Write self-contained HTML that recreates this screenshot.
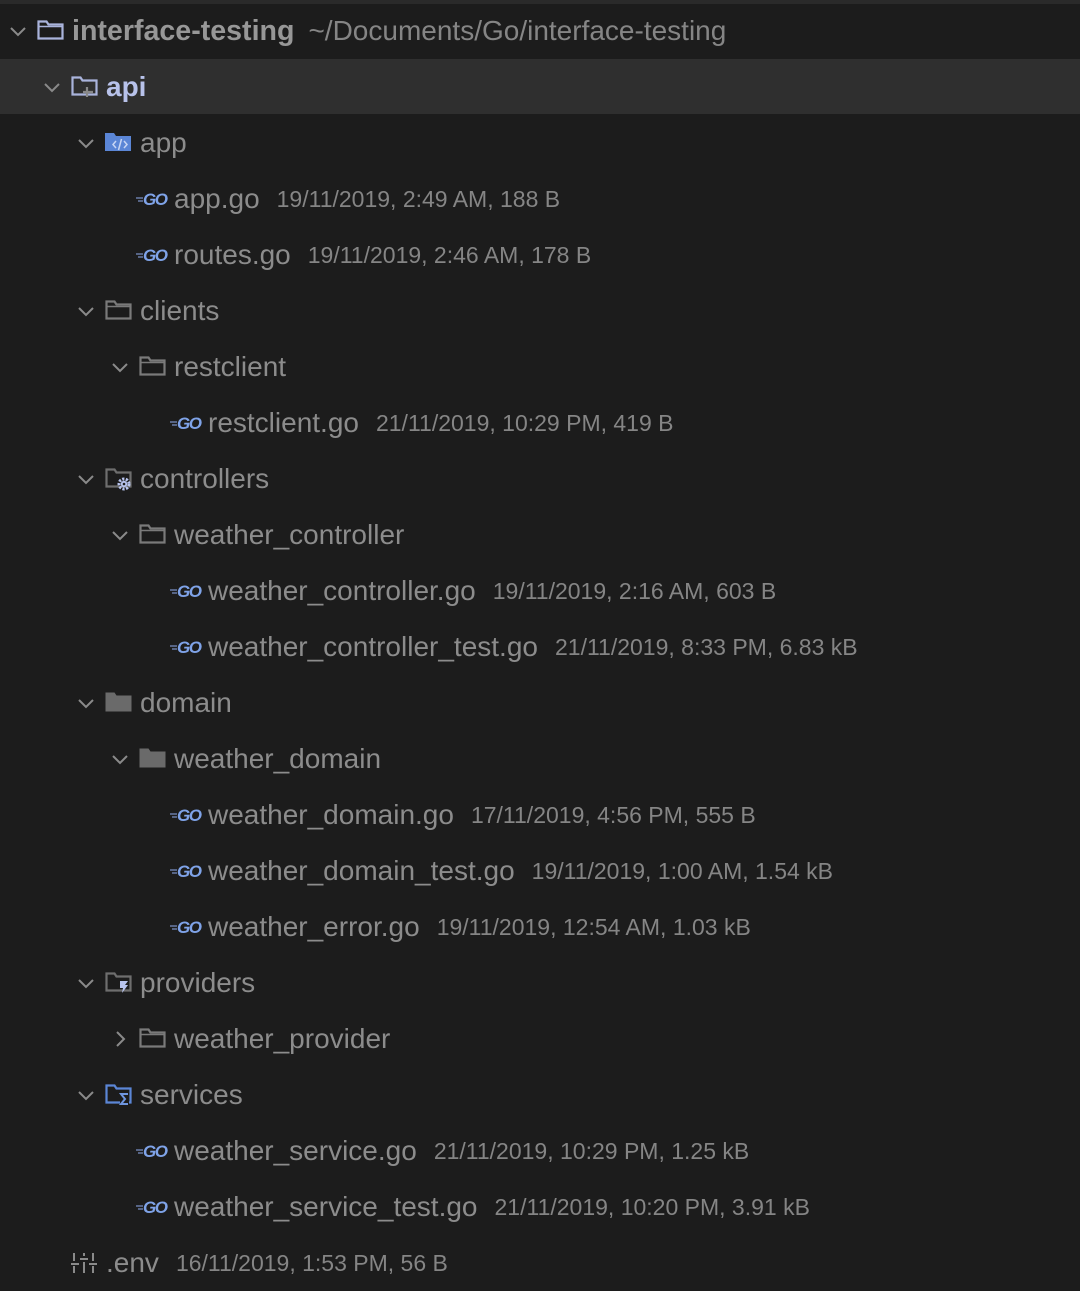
<!DOCTYPE html>
<html><head><meta charset="utf-8"><style>
html,body{margin:0;padding:0;background:#1c1c1c;width:1080px;height:1286px;overflow:hidden;font-family:"Liberation Sans",sans-serif}
.top{position:absolute;left:0;top:0;width:1080px;height:4px;background:#2a2a2a}
.hl{position:absolute;left:0;top:59px;width:1080px;height:55px;background:#2f2f2f}
.r{position:absolute;height:56px;line-height:56px;white-space:nowrap}
.n{font-size:28px;color:#8c8c8c;vertical-align:middle}
.d{font-size:23px;color:#858585;margin-left:17px;vertical-align:middle}
svg{vertical-align:middle}
.ch{position:absolute;top:18px}
.ic{position:absolute;top:16px}
.t{position:absolute;top:0}
</style></head><body>
<div class="top"></div><div class="hl"></div>

<div class="r" style="top:3px;left:0;width:1080px">
<svg class="ch" style="left:8px" width="20" height="20" viewBox="0 0 20 20"><polyline points="3,7 10,14 17,7" fill="none" stroke="#8a8a8a" stroke-width="2"/></svg>
<svg class="ic" style="left:37px" width="27" height="22" viewBox="0 0 27 22"><path d="M1.5 2.5h8l2 3h14v14h-24z" fill="none" stroke="#aab4dc" stroke-width="2.2"/><line x1="1.5" y1="7.5" x2="25.5" y2="7.5" stroke="#aab4dc" stroke-width="1.5"/></svg>
<span class="t" style="left:72px"><span class="n" style="font-weight:bold;color:#979797;font-size:28.6px">interface-testing</span><span class="d" style="font-size:28px;margin-left:14px">~/Documents/Go/interface-testing</span></span>
</div>

<div class="r" style="top:59px;left:0">
<svg class="ch" style="left:42px" width="20" height="20" viewBox="0 0 20 20"><polyline points="3,7 10,14 17,7" fill="none" stroke="#8a8a8a" stroke-width="2"/></svg>
<svg class="ic" style="left:71px" width="28" height="24" viewBox="0 0 28 24"><path d="M1.5 2.5h8l2 3h14v14h-24z" fill="none" stroke="#aab4dc" stroke-width="2.2"/><path d="M16 12v10M12 17h10" stroke="#888" stroke-width="2.2"/></svg>
<span class="t" style="left:106px"><span class="n" style="font-weight:bold;color:#b8c2ea">api</span></span>
</div>

<div class="r" style="top:115px;left:0">
<svg class="ch" style="left:76px" width="20" height="20" viewBox="0 0 20 20"><polyline points="3,7 10,14 17,7" fill="none" stroke="#8a8a8a" stroke-width="2"/></svg>
<svg class="ic" style="left:105px" width="28" height="24" viewBox="0 0 28 24"><path d="M0 2h9l2 3h15v15h-26z" fill="#5b86d6"/><path d="M11 10l-3 3.5 3 3.5M19 10l3 3.5-3 3.5M16.5 8l-3 11" fill="none" stroke="#c8d6f4" stroke-width="1.5"/></svg>
<span class="t" style="left:140px"><span class="n">app</span></span>
</div>

<div class="r" style="top:171px;left:136px"><svg width="33" height="16" viewBox="0 0 33 16"><path d="M0 7h7M2 10h5" stroke="#7a8fc4" stroke-width="1.3"/><text x="7" y="14" font-family="Liberation Sans" font-weight="bold" font-style="italic" font-size="17" fill="#7fa3e8" textLength="25">GO</text></svg><span class="n" style="margin-left:5px">app.go</span><span class="d">19/11/2019, 2:49 AM, 188 B</span></div>
<div class="r" style="top:227px;left:136px"><svg width="33" height="16" viewBox="0 0 33 16"><path d="M0 7h7M2 10h5" stroke="#7a8fc4" stroke-width="1.3"/><text x="7" y="14" font-family="Liberation Sans" font-weight="bold" font-style="italic" font-size="17" fill="#7fa3e8" textLength="25">GO</text></svg><span class="n" style="margin-left:5px">routes.go</span><span class="d">19/11/2019, 2:46 AM, 178 B</span></div>

<div class="r" style="top:283px;left:0">
<svg class="ch" style="left:76px" width="20" height="20" viewBox="0 0 20 20"><polyline points="3,7 10,14 17,7" fill="none" stroke="#8a8a8a" stroke-width="2"/></svg>
<svg class="ic" style="left:105px" width="27" height="22" viewBox="0 0 27 22"><path d="M1.5 2.5h8l2 3h14v14h-24z" fill="none" stroke="#7a7a7a" stroke-width="2.2"/><line x1="1.5" y1="7.5" x2="25.5" y2="7.5" stroke="#7a7a7a" stroke-width="1.5"/></svg>
<span class="t" style="left:140px"><span class="n">clients</span></span>
</div>
<div class="r" style="top:339px;left:0">
<svg class="ch" style="left:110px" width="20" height="20" viewBox="0 0 20 20"><polyline points="3,7 10,14 17,7" fill="none" stroke="#8a8a8a" stroke-width="2"/></svg>
<svg class="ic" style="left:139px" width="27" height="22" viewBox="0 0 27 22"><path d="M1.5 2.5h8l2 3h14v14h-24z" fill="none" stroke="#7a7a7a" stroke-width="2.2"/><line x1="1.5" y1="7.5" x2="25.5" y2="7.5" stroke="#7a7a7a" stroke-width="1.5"/></svg>
<span class="t" style="left:174px"><span class="n">restclient</span></span>
</div>
<div class="r" style="top:395px;left:170px"><svg width="33" height="16" viewBox="0 0 33 16"><path d="M0 7h7M2 10h5" stroke="#7a8fc4" stroke-width="1.3"/><text x="7" y="14" font-family="Liberation Sans" font-weight="bold" font-style="italic" font-size="17" fill="#7fa3e8" textLength="25">GO</text></svg><span class="n" style="margin-left:5px">restclient.go</span><span class="d">21/11/2019, 10:29 PM, 419 B</span></div>

<div class="r" style="top:451px;left:0">
<svg class="ch" style="left:76px" width="20" height="20" viewBox="0 0 20 20"><polyline points="3,7 10,14 17,7" fill="none" stroke="#8a8a8a" stroke-width="2"/></svg>
<svg class="ic" style="left:105px" width="30" height="26" viewBox="0 0 30 26"><path d="M1.5 2.5h8l2 3h14v14h-24z" fill="none" stroke="#6e6e6e" stroke-width="2.2"/><circle cx="19" cy="17" r="5" fill="none" stroke="#b8c4ee" stroke-width="3" stroke-dasharray="2.2 1.4"/><circle cx="19" cy="17" r="3.2" fill="#b8c4ee"/><circle cx="19" cy="17" r="1.3" fill="#1c1c1c"/></svg>
<span class="t" style="left:140px"><span class="n">controllers</span></span>
</div>
<div class="r" style="top:507px;left:0">
<svg class="ch" style="left:110px" width="20" height="20" viewBox="0 0 20 20"><polyline points="3,7 10,14 17,7" fill="none" stroke="#8a8a8a" stroke-width="2"/></svg>
<svg class="ic" style="left:139px" width="27" height="22" viewBox="0 0 27 22"><path d="M1.5 2.5h8l2 3h14v14h-24z" fill="none" stroke="#7a7a7a" stroke-width="2.2"/><line x1="1.5" y1="7.5" x2="25.5" y2="7.5" stroke="#7a7a7a" stroke-width="1.5"/></svg>
<span class="t" style="left:174px"><span class="n">weather_controller</span></span>
</div>
<div class="r" style="top:563px;left:170px"><svg width="33" height="16" viewBox="0 0 33 16"><path d="M0 7h7M2 10h5" stroke="#7a8fc4" stroke-width="1.3"/><text x="7" y="14" font-family="Liberation Sans" font-weight="bold" font-style="italic" font-size="17" fill="#7fa3e8" textLength="25">GO</text></svg><span class="n" style="margin-left:5px">weather_controller.go</span><span class="d">19/11/2019, 2:16 AM, 603 B</span></div>
<div class="r" style="top:619px;left:170px"><svg width="33" height="16" viewBox="0 0 33 16"><path d="M0 7h7M2 10h5" stroke="#7a8fc4" stroke-width="1.3"/><text x="7" y="14" font-family="Liberation Sans" font-weight="bold" font-style="italic" font-size="17" fill="#7fa3e8" textLength="25">GO</text></svg><span class="n" style="margin-left:5px">weather_controller_test.go</span><span class="d">21/11/2019, 8:33 PM, 6.83 kB</span></div>

<div class="r" style="top:675px;left:0">
<svg class="ch" style="left:76px" width="20" height="20" viewBox="0 0 20 20"><polyline points="3,7 10,14 17,7" fill="none" stroke="#8a8a8a" stroke-width="2"/></svg>
<svg class="ic" style="left:105px" width="27" height="22" viewBox="0 0 27 22"><path d="M0.5 1.5h9l2 3h15v16h-26z" fill="#6a6a6a"/></svg>
<span class="t" style="left:140px"><span class="n">domain</span></span>
</div>
<div class="r" style="top:731px;left:0">
<svg class="ch" style="left:110px" width="20" height="20" viewBox="0 0 20 20"><polyline points="3,7 10,14 17,7" fill="none" stroke="#8a8a8a" stroke-width="2"/></svg>
<svg class="ic" style="left:139px" width="27" height="22" viewBox="0 0 27 22"><path d="M0.5 1.5h9l2 3h15v16h-26z" fill="#6a6a6a"/></svg>
<span class="t" style="left:174px"><span class="n">weather_domain</span></span>
</div>
<div class="r" style="top:787px;left:170px"><svg width="33" height="16" viewBox="0 0 33 16"><path d="M0 7h7M2 10h5" stroke="#7a8fc4" stroke-width="1.3"/><text x="7" y="14" font-family="Liberation Sans" font-weight="bold" font-style="italic" font-size="17" fill="#7fa3e8" textLength="25">GO</text></svg><span class="n" style="margin-left:5px">weather_domain.go</span><span class="d">17/11/2019, 4:56 PM, 555 B</span></div>
<div class="r" style="top:843px;left:170px"><svg width="33" height="16" viewBox="0 0 33 16"><path d="M0 7h7M2 10h5" stroke="#7a8fc4" stroke-width="1.3"/><text x="7" y="14" font-family="Liberation Sans" font-weight="bold" font-style="italic" font-size="17" fill="#7fa3e8" textLength="25">GO</text></svg><span class="n" style="margin-left:5px">weather_domain_test.go</span><span class="d">19/11/2019, 1:00 AM, 1.54 kB</span></div>
<div class="r" style="top:899px;left:170px"><svg width="33" height="16" viewBox="0 0 33 16"><path d="M0 7h7M2 10h5" stroke="#7a8fc4" stroke-width="1.3"/><text x="7" y="14" font-family="Liberation Sans" font-weight="bold" font-style="italic" font-size="17" fill="#7fa3e8" textLength="25">GO</text></svg><span class="n" style="margin-left:5px">weather_error.go</span><span class="d">19/11/2019, 12:54 AM, 1.03 kB</span></div>

<div class="r" style="top:955px;left:0">
<svg class="ch" style="left:76px" width="20" height="20" viewBox="0 0 20 20"><polyline points="3,7 10,14 17,7" fill="none" stroke="#8a8a8a" stroke-width="2"/></svg>
<svg class="ic" style="left:105px" width="28" height="26" viewBox="0 0 28 26"><path d="M1.5 2.5h8l2 3h14v14h-24z" fill="none" stroke="#6e6e6e" stroke-width="2.2"/><path d="M15 10h8l-3 4h3l-6 8 1-5h-3z" fill="#b8c4ee"/></svg>
<span class="t" style="left:140px"><span class="n">providers</span></span>
</div>
<div class="r" style="top:1011px;left:0">
<svg class="ch" style="left:110px" width="20" height="20" viewBox="0 0 20 20"><polyline points="7,3 14,10 7,17" fill="none" stroke="#8a8a8a" stroke-width="2"/></svg>
<svg class="ic" style="left:139px" width="27" height="22" viewBox="0 0 27 22"><path d="M1.5 2.5h8l2 3h14v14h-24z" fill="none" stroke="#7a7a7a" stroke-width="2.2"/><line x1="1.5" y1="7.5" x2="25.5" y2="7.5" stroke="#7a7a7a" stroke-width="1.5"/></svg>
<span class="t" style="left:174px"><span class="n">weather_provider</span></span>
</div>

<div class="r" style="top:1067px;left:0">
<svg class="ch" style="left:76px" width="20" height="20" viewBox="0 0 20 20"><polyline points="3,7 10,14 17,7" fill="none" stroke="#8a8a8a" stroke-width="2"/></svg>
<svg class="ic" style="left:105px" width="28" height="26" viewBox="0 0 28 26"><path d="M1.5 2.5h8l2 3h14v14h-24z" fill="none" stroke="#5b86d6" stroke-width="2.2"/><path d="M15 10h9v13h-9z" fill="#1c1c1c"/><path d="M23 11h-7l4 5-4 5h7" fill="none" stroke="#6f96e0" stroke-width="2"/></svg>
<span class="t" style="left:140px"><span class="n">services</span></span>
</div>
<div class="r" style="top:1123px;left:136px"><svg width="33" height="16" viewBox="0 0 33 16"><path d="M0 7h7M2 10h5" stroke="#7a8fc4" stroke-width="1.3"/><text x="7" y="14" font-family="Liberation Sans" font-weight="bold" font-style="italic" font-size="17" fill="#7fa3e8" textLength="25">GO</text></svg><span class="n" style="margin-left:5px">weather_service.go</span><span class="d">21/11/2019, 10:29 PM, 1.25 kB</span></div>
<div class="r" style="top:1179px;left:136px"><svg width="33" height="16" viewBox="0 0 33 16"><path d="M0 7h7M2 10h5" stroke="#7a8fc4" stroke-width="1.3"/><text x="7" y="14" font-family="Liberation Sans" font-weight="bold" font-style="italic" font-size="17" fill="#7fa3e8" textLength="25">GO</text></svg><span class="n" style="margin-left:5px">weather_service_test.go</span><span class="d">21/11/2019, 10:20 PM, 3.91 kB</span></div>

<div class="r" style="top:1235px;left:70px"><svg width="28" height="24" viewBox="0 0 28 24"><path d="M1 13h8M4 2v8M4 15v7M10 8h8M14 2v3M14 11v11M19 13h8M23 2v8M23 15v7" stroke="#8a8a8a" stroke-width="2"/></svg><span class="n" style="margin-left:8px">.env</span><span class="d">16/11/2019, 1:53 PM, 56 B</span></div>
</body></html>
